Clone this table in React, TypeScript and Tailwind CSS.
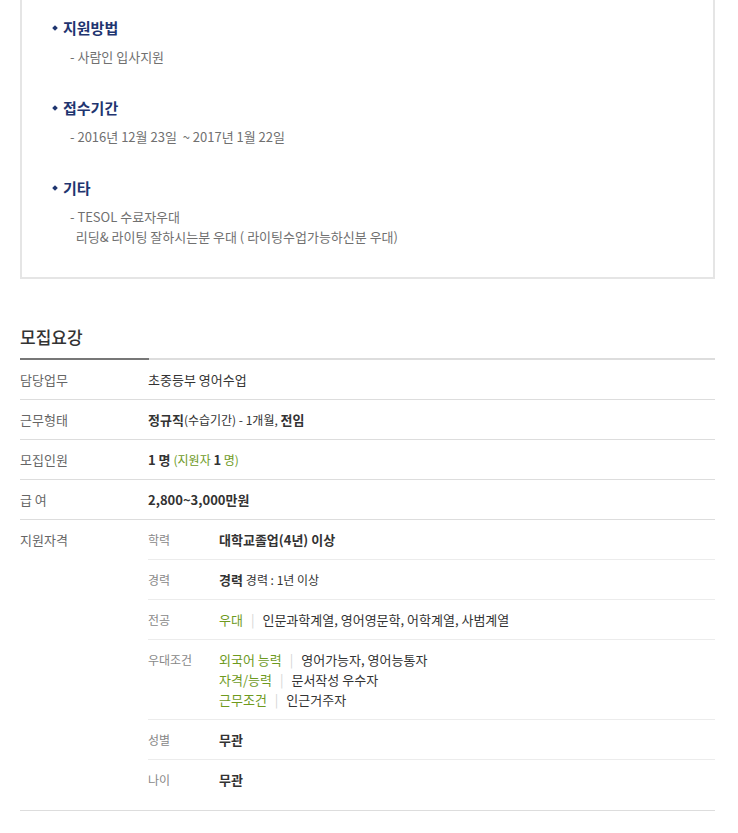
import React from 'react';

const FONT = { fontFamily: '"Noto Sans CJK KR", "Noto Sans", sans-serif' };

interface GuideSection {
  title: string;
  lines: string[];
}

const sections: GuideSection[] = [
  { title: '지원방법', lines: ['- 사람인 입사지원'] },
  { title: '접수기간', lines: ['- 2016년 12월 23일  ~ 2017년 1월 22일'] },
  {
    title: '기타',
    lines: ['- TESOL 수료자우대', '  리딩& 라이팅 잘하시는분 우대 ( 라이팅수업가능하신분 우대)']
  }
];

const Sep = () => <span className="mx-[8px] text-[#d5d5d5]">|</span>;

const Row = ({ label, children }: { label: string; children: React.ReactNode }) => (
  <div className="flex h-10 items-center border-b border-[#dddddd]">
    <div className="w-[128px] text-[13px] text-[#666]">{label}</div>
    <div className="flex-1 text-[13px] text-[#333]">{children}</div>
  </div>
);

const SubRow = ({
  label,
  children,
  last = false,
  tall = false
}: {
  label: string;
  children: React.ReactNode;
  last?: boolean;
  tall?: boolean;
}) => (
  <div
    className={`flex ${tall ? 'pt-[10px] pb-[9px]' : 'h-10 items-center'} ${last ? '' : 'border-b border-[#ececec]'}`}
  >
    <div className={`w-[71px] text-[12px] text-[#888] ${tall ? 'leading-5' : ''}`}>{label}</div>
    <div className="flex-1 text-[13px] text-[#333]">{children}</div>
  </div>
);

export default function App() {
  return (
    <div className="w-[738px] bg-white pb-6" style={FONT}>
      {/* 상세 요강 박스 */}
      <div className="ml-5 w-[695px] border-x-2 border-b-2 border-[#e5e5e5] pt-[18px] pb-[30px]">
        {sections.map((s, i) => (
          <div key={s.title} className={i > 0 ? 'mt-[31px]' : ''}>
            <div className="flex h-5 items-center pl-[31px]">
              <span className="mr-[6px] inline-block h-[4px] w-[4px] rotate-45 bg-[#1f3570]" />
              <span className="text-[15px] font-bold text-[#1f3570]">{s.title}</span>
            </div>
            <div className="mt-[9px] pl-[48px]">
              {s.lines.map((line) => (
                <div key={line} className="h-5 whitespace-pre text-[13px] leading-5 text-[#707070]">
                  {line}
                </div>
              ))}
            </div>
          </div>
        ))}
      </div>

      {/* 모집요강 */}
      <div className="ml-5 mt-[46px] w-[695px]">
        <div className="h-6 text-[17px] font-medium leading-6 text-[#333]">모집요강</div>
        <div className="mt-[9px] flex h-[2px] bg-[#dddddd]">
          <div className="w-[129px] bg-[#777777]" />
        </div>

        <Row label="담당업무">초중등부 영어수업</Row>
        <Row label="근무형태">
          <b className="font-bold">정규직</b>
          <span className="text-[12px]">(수습기간) - 1개월, </span>
          <b className="font-bold">전임</b>
        </Row>
        <Row label="모집인원">
          <span className="font-semibold">1 명</span>{' '}
          <span className="text-[12px] text-[#6e9a1e]">
            (지원자 <span className="text-[13px] font-semibold text-[#333]">1</span> 명)
          </span>
        </Row>
        <Row label="급 여">
          <span className="font-semibold">2,800~3,000만원</span>
        </Row>

        <div className="flex border-b border-[#dddddd] pb-[10px]">
          <div className="flex h-10 w-[128px] items-center text-[13px] text-[#666]">지원자격</div>
          <div className="flex-1">
            <SubRow label="학력">
              <span className="font-bold">대학교졸업(4년) 이상</span>
            </SubRow>
            <SubRow label="경력">
              <span className="font-bold">경력</span> <span className="text-[12px]">경력 : 1년 이상</span>
            </SubRow>
            <SubRow label="전공">
              <span className="text-[#6e9a1e]">우대</span>
              <Sep />
              인문과학계열, 영어영문학, 어학계열, 사범계열
            </SubRow>
            <SubRow label="우대조건" tall>
              <div className="leading-5">
                <span className="text-[#6e9a1e]">외국어 능력</span>
                <Sep />
                영어가능자, 영어능통자
              </div>
              <div className="leading-5">
                <span className="text-[#6e9a1e]">자격/능력</span>
                <Sep />
                문서작성 우수자
              </div>
              <div className="leading-5">
                <span className="text-[#6e9a1e]">근무조건</span>
                <Sep />
                인근거주자
              </div>
            </SubRow>
            <SubRow label="성별">
              <span className="font-bold">무관</span>
            </SubRow>
            <SubRow label="나이" last>
              <span className="font-bold">무관</span>
            </SubRow>
          </div>
        </div>
      </div>
    </div>
  );
}
